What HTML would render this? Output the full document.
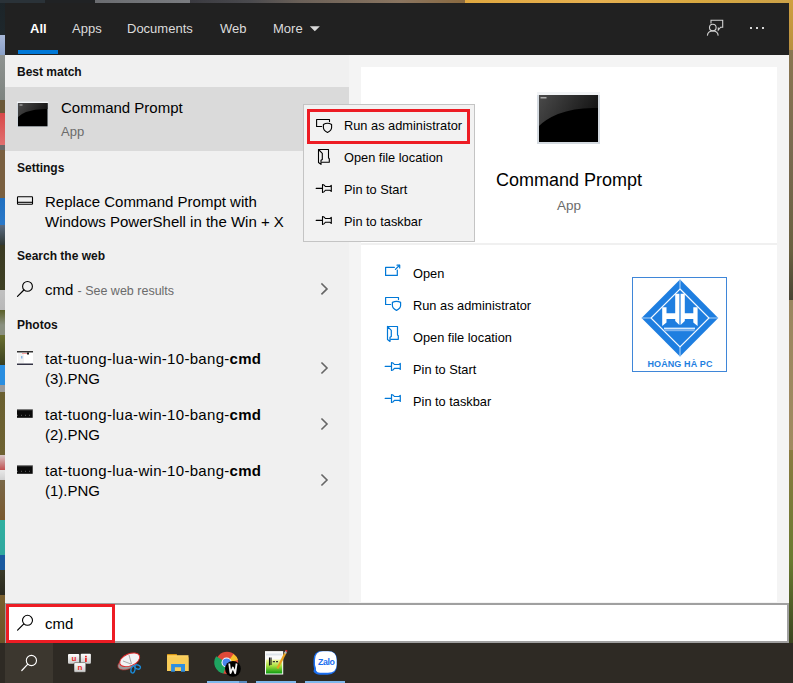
<!DOCTYPE html>
<html><head><meta charset="utf-8">
<style>
*{margin:0;padding:0;box-sizing:border-box}
html,body{width:793px;height:683px;overflow:hidden;background:#2b2620;font-family:"Liberation Sans",sans-serif}
.a{position:absolute;white-space:nowrap}
#desk-l{left:0;top:0;width:5px;height:643px;background:linear-gradient(#1c2428 0,#1e272c 35px,#a8b8d8 35px,#8aa0c8 55px,#8e9290 55px,#7e8480 100px,#6a5838 100px,#6a5838 113px,#d84848 113px,#e07070 145px,#6a6a6a 145px,#6a6a6a 150px,#7a6040 150px,#7a6040 198px,#2070c0 198px,#2a78c8 225px,#5a6a80 225px,#303834 245px,#3a3a22 245px,#3e4024 290px,#c0c0c0 290px,#b8b8b8 310px,#5a6028 310px,#8a9080 325px,#8a9080 335px,#6a7030 335px,#3a4020 365px,#2a8ee0 365px,#2a8ee0 385px,#9a9a9a 385px,#9a9a9a 392px,#6a6030 392px,#6e6232 455px,#d8c8c8 455px,#c05050 470px,#e8e8e8 470px,#d0d0d0 480px,#7a6848 480px,#7a5a30 520px,#30b0a0 520px,#30a8a0 555px,#1a5aa0 555px,#1a5aa0 570px,#3a3a28 570px,#2a2a20 595px,#7a6030 595px,#6a5428 643px)}
#desk-t{left:0;top:0;width:793px;height:3px;background:linear-gradient(90deg,#2a3238 0,#2a3238 45px,#202224 45px,#202224 95px,#6a6c70 95px,#7a7c80 190px,#3a3a40 190px,#4a4a4e 250px,#6a6058 300px,#8a7560 400px,#8a6a40 465px,#e0a840 465px,#e6b050 600px,#d8a840 700px,#caa048 793px)}
#desk-r{left:789px;top:0;width:4px;height:643px;background:linear-gradient(#d0a040 0,#b89040 50px,#8a7650 50px,#7a6a50 150px,#6a6040 250px,#4a4434 300px,#9a8660 300px,#a08a60 450px,#8a7a40 450px,#6a7a30 560px,#3a4420 643px)}
#hdr{left:5px;top:3px;width:784px;height:52px;background:#212121}
.tab{top:21px;font-size:13px;color:#dcdcdc;line-height:16px}
#left{left:5px;top:55px;width:344px;height:548px;background:#f0f0f0}
#strip{left:349px;top:55px;width:440px;height:548px;background:#f4f4f4}
#card{left:361px;top:67px;width:416px;height:535px;background:#fff}
.hd{font-size:12px;font-weight:700;color:#111;line-height:15px}
.t15{font-size:15px;color:#000;line-height:20px}
.g{color:#6b6b6b}
#sbox{left:5px;top:603px;width:784px;height:40px;background:#fff;border:2px solid #a0a0a0;border-right-width:2px}
.m13{font-size:12.8px;color:#000;line-height:16px}
#task{left:0;top:643px;width:793px;height:40px;background:#2e2a24}
</style></head><body>
<div class="a" id="desk-l"></div>
<div class="a" id="desk-t"></div>
<div class="a" id="desk-r"></div>
<div class="a" id="hdr"></div>
<div class="a tab" style="left:30px;color:#fff;font-weight:700">All</div>
<div class="a" style="left:18px;top:50px;width:40px;height:4px;background:#0078d7"></div>
<div class="a tab" style="left:72px">Apps</div>
<div class="a tab" style="left:127px">Documents</div>
<div class="a tab" style="left:220px">Web</div>
<div class="a tab" style="left:273px">More</div>

<svg class="a" style="left:0;top:0" width="793" height="54" viewBox="0 0 793 54" fill="none">
 <path d="M309.8 26.2H319.9L314.85 31.3Z" fill="#d8d8d8"/>
 <g stroke="#d4d4d4" stroke-width="1.1">
  <path d="M711 23.6V20.3H722.7V27.2H720.6L718.3 30V27.6"/>
  <circle cx="712.8" cy="27.6" r="3.3"/>
  <path d="M707.4 35.6Q707.8 31 712.8 31Q717.8 31 718.2 35.6"/>
 </g>
 <g fill="#d8d8d8"><rect x="750" y="27" width="2" height="2"/><rect x="756" y="27" width="2" height="2"/><rect x="762" y="27" width="2" height="2"/></g>
</svg>
<div class="a" id="left"></div>
<div class="a" id="strip"></div>
<div class="a" id="card"></div>

<div class="a hd" style="left:17px;top:65px">Best match</div>
<div class="a" style="left:5px;top:87px;width:344px;height:64px;background:#dadada"></div>
<div class="a t15" style="left:61px;top:98px">Command Prompt</div>
<div class="a t15 g" style="left:61px;top:122px;font-size:13px">App</div>

<div class="a hd" style="left:17px;top:161px">Settings</div>
<div class="a t15" style="left:45px;top:192px">Replace Command Prompt with</div>
<div class="a t15" style="left:45px;top:212px">Windows PowerShell in the Win + X</div>

<div class="a hd" style="left:17px;top:249px">Search the web</div>
<div class="a t15" style="left:45px;top:280px">cmd <span class="g" style="font-size:12.5px">- See web results</span></div>

<div class="a hd" style="left:17px;top:318px">Photos</div>
<div class="a t15" style="left:45px;top:349px;letter-spacing:0.3px">tat-tuong-lua-win-10-bang-<b>cmd</b></div>
<div class="a t15" style="left:45px;top:369px">(3).PNG</div>
<div class="a t15" style="left:45px;top:405px;letter-spacing:0.3px">tat-tuong-lua-win-10-bang-<b>cmd</b></div>
<div class="a t15" style="left:45px;top:425px">(2).PNG</div>
<div class="a t15" style="left:45px;top:461px;letter-spacing:0.3px">tat-tuong-lua-win-10-bang-<b>cmd</b></div>
<div class="a t15" style="left:45px;top:481px">(1).PNG</div>

<div class="a t15" style="left:496px;top:169px;font-size:18px;line-height:22px">Command Prompt</div>
<div class="a t15 g" style="left:557px;top:196px;font-size:13.5px">App</div>
<div class="a" style="left:361px;top:243px;width:416px;height:2px;background:#f0f0f0"></div>


<div class="a" style="left:303px;top:104px;width:172px;height:138px;background:#f2f2f2;border:1px solid #c4c4c4"></div>
<div class="a" style="left:307px;top:109px;width:163px;height:35px;border:3px solid #ed1c24"></div>
<div class="a m13" style="left:344px;top:118px">Run as administrator</div>
<div class="a m13" style="left:344px;top:150px">Open file location</div>
<div class="a m13" style="left:344px;top:182px">Pin to Start</div>
<div class="a m13" style="left:344px;top:214px">Pin to taskbar</div>

<div class="a m13" style="left:413px;top:266px">Open</div>
<div class="a m13" style="left:413px;top:298px">Run as administrator</div>
<div class="a m13" style="left:413px;top:330px">Open file location</div>
<div class="a m13" style="left:413px;top:362px">Pin to Start</div>
<div class="a m13" style="left:413px;top:394px">Pin to taskbar</div>


<svg class="a" style="left:0;top:0" width="793" height="683" viewBox="0 0 793 683" fill="none" stroke-linejoin="round" stroke-linecap="round">
 
 <g stroke="#000" stroke-width="1.1">
  <g transform="translate(312 114)"><path d="M9.7 12.5H4.6V5.5H17.5V7.6"/><path d="M11.4 10.4Q15.5 8.2 19.6 10.4V13.6Q19.6 16.6 15.5 18.4Q11.4 16.6 11.4 13.6Z"/></g>
  <g transform="translate(312 145)"><path d="M6.5 4.5H16.5V13L17.3 13.7V17.3H9.7"/><path d="M6.5 4.5V17.5L9 19.4V15.3L10.3 14.5V8.3Z"/></g>
  <g transform="translate(312 177)"><path d="M4.2 11.4H10.5"/><path d="M10.5 7.5V15.5Q12 15.4 13.4 13.3H18L19.3 14.4V8.4L18 9.5H13.4Q12 7.6 10.5 7.5Z"/></g>
  <g transform="translate(312 209)"><path d="M4.2 11.4H10.5"/><path d="M10.5 7.5V15.5Q12 15.4 13.4 13.3H18L19.3 14.4V8.4L18 9.5H13.4Q12 7.6 10.5 7.5Z"/></g>
 </g>
 <g stroke="#0078d7" stroke-width="1.2">
  <g transform="translate(381 258)"><path d="M13.4 9.3H4.6V17.4H16.3V12.1"/><path d="M14.4 11.4L18.3 7.5"/><path d="M16 7.2H18.7V9.9" /></g>
  <g transform="translate(381 292)"><path d="M9.7 12.5H4.6V5.5H17.5V7.6"/><path d="M11.4 10.4Q15.5 8.2 19.6 10.4V13.6Q19.6 16.6 15.5 18.4Q11.4 16.6 11.4 13.6Z"/></g>
  <g transform="translate(381 322)"><path d="M6.5 4.5H16.5V13L17.3 13.7V17.3H9.7"/><path d="M6.5 4.5V17.5L9 19.4V15.3L10.3 14.5V8.3Z"/></g>
  <g transform="translate(381 355)"><path d="M4.2 11.4H10.5"/><path d="M10.5 7.5V15.5Q12 15.4 13.4 13.3H18L19.3 14.4V8.4L18 9.5H13.4Q12 7.6 10.5 7.5Z"/></g>
  <g transform="translate(381 387)"><path d="M4.2 11.4H10.5"/><path d="M10.5 7.5V15.5Q12 15.4 13.4 13.3H18L19.3 14.4V8.4L18 9.5H13.4Q12 7.6 10.5 7.5Z"/></g>
 </g>
</svg>


<svg class="a" style="left:632px;top:277px" width="96" height="96" viewBox="632 277 96 96">
 <rect x="632.5" y="277.5" width="94" height="94" fill="#fff" stroke="#3f86d8" stroke-width="1"/>
 <path d="M680 279.6L718.2 318L680 356.4L641.6 318Z" fill="#1e7ee0"/>
 <path d="M680 289L709 318L680 347L651 318Z" fill="none" stroke="#f4f9ff" stroke-width="1.2"/>
 <path d="M680 279.6V289M680 347V356.4M641.6 318H651M709 318H718.2" stroke="#a8d0f8" stroke-width="1.1"/>
 <g fill="#fff">
  <path d="M662.2 307.3H666.5V313.2H675.2V293.8H679.4V325L675.2 321V319H666.5V322.5L662.2 326Z"/>
  <path d="M697.6 307.3H693.3V313.2H684.8V293.8H680.6V325L684.8 321V319H693.3V322.5L697.6 326Z"/>
 </g>
 <rect x="664" y="327.6" width="31" height="1.6" fill="#d8ecff"/>
 <rect x="664.5" y="329.2" width="30" height="2" fill="#7fb4ee"/>
 <text x="680" y="366.6" text-anchor="middle" font-family="Liberation Sans" font-weight="700" font-size="9" fill="#1f7fdf" letter-spacing="0.1">HOÀNG HÀ PC</text>
</svg>


<svg class="a" style="left:0;top:0" width="793" height="683" viewBox="0 0 793 683" fill="none">
 <defs>
  <linearGradient id="cmdhl" x1="0" y1="0" x2="1" y2="0.3">
   <stop offset="0" stop-color="#4a4a4a"/><stop offset="1" stop-color="#161616"/>
  </linearGradient>
 </defs>
 <!-- small cmd icon -->
 <rect x="17" y="101.6" width="31.3" height="25.4" fill="#cfd6dc"/>
 <rect x="17" y="101.6" width="31.3" height="1.6" fill="#f4f6f8"/>
 <rect x="18" y="103" width="29.5" height="23.3" fill="#000"/>
 <path d="M18 103H47.5V109Q36 108.5 26 112Q21 114 18 117Z" fill="url(#cmdhl)"/>
 <rect x="19.5" y="104.5" width="3" height="1" fill="#bbb"/>
 <!-- large cmd icon -->
 <rect x="537" y="92" width="63" height="52" fill="#d4dae0"/>
 <rect x="537" y="92" width="63" height="3" fill="#f2f4f6"/>
 <rect x="539" y="95" width="59" height="47" fill="#000"/>
 <path d="M539 95H598V108Q576 107 558 114Q546 119 539 126Z" fill="url(#cmdhl)"/>
 <rect x="540.5" y="97" width="6" height="1.5" fill="#aaa"/>
 <!-- monitor icon -->
 <rect x="17.5" y="196.8" width="15" height="7.5" rx="0.6" stroke="#000" stroke-width="1.1"/>
 <path d="M17.5 202.3H32.5" stroke="#000" stroke-width="1.1"/>
 <!-- search web icon -->
 <circle cx="27.5" cy="286.4" r="4.9" stroke="#000" stroke-width="1.1"/>
 <path d="M23.9 290L17.5 296.4" stroke="#000" stroke-width="1.2" stroke-linecap="round"/>
 <!-- chevrons -->
 <g stroke="#666" stroke-width="1.6" stroke-linecap="square">
  <path d="M322 284L327 288.9L322 293.8"/>
  <path d="M322 363.1L327 368L322 372.9"/>
  <path d="M322 419.1L327 424L322 428.9"/>
  <path d="M322 475.1L327 480L322 484.9"/>
 </g>
 <!-- photo thumbs -->
 <rect x="17" y="351" width="16" height="14" fill="#fff"/>
 <rect x="17" y="351" width="16" height="1.5" fill="#333"/>
 <rect x="17" y="363.5" width="16" height="1.5" fill="#334"/>
 <rect x="18" y="353" width="6" height="10" fill="#f2f2f2"/>
 <rect x="21" y="356" width="1.5" height="2.5" fill="#8bb8e8"/>
 <rect x="27" y="352.5" width="2" height="2" fill="#111"/>
 <rect x="22" y="353" width="5" height="1" fill="#f2a0a0"/>
 <rect x="17" y="409.4" width="15.7" height="8.4" fill="#0a0a0a"/>
 <rect x="17" y="409.4" width="15.7" height="0.8" fill="#888"/>
 <path d="M17 415.3H33" stroke="#777" stroke-width="0.8" stroke-dasharray="1 3"/>
 <rect x="17" y="465.4" width="15.7" height="8.4" fill="#0a0a0a"/>
 <rect x="17" y="465.4" width="15.7" height="0.8" fill="#888"/>
 <path d="M17 471.3H33" stroke="#777" stroke-width="0.8" stroke-dasharray="1 3"/>
</svg>

<div class="a" id="sbox"></div>
<svg class="a" style="left:0;top:600px" width="60" height="40" viewBox="0 600 60 40" fill="none">
 <circle cx="27.5" cy="620.3" r="5" stroke="#000" stroke-width="1.1"/>
 <path d="M23.6 624.1L17.6 630.1" stroke="#000" stroke-width="1.2" stroke-linecap="round"/>
</svg>
<div class="a t15" style="left:45px;top:614px">cmd</div>
<div class="a" style="left:6px;top:604px;width:109px;height:39px;border:3px solid #ed1c24"></div>

<div class="a" id="task"></div>
<div class="a" style="left:5px;top:643px;width:48px;height:40px;background:#3c372f"></div>

<svg class="a" style="left:0;top:643px" width="793" height="40" viewBox="0 643 793 40" fill="none">
 <defs>
  <linearGradient id="npg" x1="0" y1="0" x2="0" y2="1"><stop offset="0" stop-color="#f4f8a8"/><stop offset="0.45" stop-color="#a8e040"/><stop offset="1" stop-color="#0a9a10"/></linearGradient>
  <linearGradient id="key" x1="0" y1="0" x2="0" y2="1"><stop offset="0" stop-color="#ffffff"/><stop offset="1" stop-color="#c8c8c8"/></linearGradient>
 </defs>
 <!-- search -->
 <circle cx="31.4" cy="660.5" r="5.1" stroke="#fff" stroke-width="1.1"/>
 <path d="M27.6 664.4L21.8 670.5" stroke="#fff" stroke-width="1.2" stroke-linecap="round"/>
 <!-- unikey -->
 <rect x="68" y="654" width="11.3" height="9.8" rx="1" fill="url(#key)"/>
 <rect x="80.7" y="653.8" width="10.2" height="10" rx="1" fill="url(#key)"/>
 <rect x="74" y="662.6" width="11.8" height="9.7" rx="1" fill="url(#key)" stroke="#2f2a24" stroke-width="0.5"/>
 <g fill="#e82828" font-family="Liberation Sans" font-weight="700" font-size="8">
  <text x="71.5" y="660.5">u</text></g><rect x="85" y="655.8" width="1.8" height="1.4" fill="#e82828"/><rect x="85" y="657.8" width="1.8" height="4.2" fill="#e82828"/><g fill="#e82828" font-family="Liberation Sans" font-weight="700" font-size="8"><text x="77.5" y="669.5">n</text>
 </g>
 <!-- snipping -->
 <ellipse cx="127.5" cy="663.5" rx="10.2" ry="5.6" transform="rotate(-22 127.5 663.5)" fill="#9a9a9a" stroke="#c03030" stroke-width="0.6"/>
 <ellipse cx="129.7" cy="659.8" rx="10.6" ry="6" transform="rotate(-22 129.7 659.8)" fill="#f2f2f4" stroke="#e02a2a" stroke-width="0.9"/>
 <path d="M123 661L131 664M129 655L131.5 664" stroke="#888" stroke-width="0.7"/>
 <ellipse cx="133" cy="669.5" rx="2" ry="3.6" transform="rotate(15 133 669.5)" stroke="#1a8ad8" stroke-width="1.3"/>
 <ellipse cx="137.6" cy="667" rx="2.9" ry="2" transform="rotate(20 137.6 667)" stroke="#1a8ad8" stroke-width="1.3"/>
 <!-- explorer -->
 <rect x="167.1" y="654.1" width="9.8" height="3.5" fill="#e8a010"/>
 <rect x="167.1" y="655.2" width="21.4" height="15.8" fill="#fcd060"/>
 <rect x="167.1" y="657.3" width="21.4" height="13.7" fill="#f8cc58"/>
 <path d="M171.1 671.7V663.9H185V671.7H181V667.2H174.9V671.7Z" fill="#2f8fe0"/>
 <!-- chrome -->
 <circle cx="227" cy="662.9" r="11.1" fill="#e04a3a"/>
 <path d="M227 662.9L216.2 656.2A11.1 11.1 0 0 0 223.5 673.5Z" fill="#1ea460"/>
 <path d="M227 662.9L238 660A11.1 11.1 0 0 0 233.5 654Z" fill="#f6c02c"/>
 <circle cx="226.6" cy="662.5" r="5.1" fill="#fff"/>
 <circle cx="226.6" cy="662.5" r="4.1" fill="#4a88f0"/>
 <circle cx="232.9" cy="668.8" r="7.9" fill="#000"/>
 <path d="M229.2 663.5L230.5 673.2L232.9 667.5L235.2 673.2L236.6 663.5" stroke="#f4f4f4" stroke-width="1.8" stroke-linejoin="round"/>
 <!-- notepad++ -->
 <rect x="265" y="651.1" width="18.2" height="23.4" fill="#fafafa"/>
 <rect x="266" y="659.5" width="16.2" height="14" fill="url(#npg)"/>
 <rect x="266" y="653.5" width="16.2" height="2" fill="#dde4ea"/>
 <path d="M269.5 657.5V665.5M271 657.5V665" stroke="#111" stroke-width="1.1"/>
 <path d="M272.8 661.6H275M276 661.6H278" stroke="#333" stroke-width="1.2"/>
 <path d="M277.4 668.4L285.6 652.4" stroke="#e8a020" stroke-width="2.2"/>
 <path d="M285 653.4L286.3 651" stroke="#b0b8c0" stroke-width="2"/>
 <path d="M286 651.5L286.8 650.2" stroke="#d82828" stroke-width="2"/>
 <!-- zalo -->
 <path d="M313.5 660Q313.5 651 322 651H328Q337 651 337 660V665Q337 674.7 327.5 674.7H320Q316 674.7 313.5 671.5Q314.5 669 313.5 665Z" fill="#1a6ef0"/>
 <path d="M315 660Q315 651.3 323 651.3H328Q336.6 651.3 336.6 660V664.5Q336.6 672.8 328 672.8H320Q317 672.8 316 670.5Q316.3 668 315 665Z" fill="#fff"/>
 <text x="326.3" y="665.3" text-anchor="middle" font-family="Liberation Sans" font-weight="700" font-size="8.8" fill="#1a6ef0" letter-spacing="-0.4">Zalo</text>
 <!-- running indicators -->
 <rect x="207" y="681" width="32" height="2" fill="#7fb8ec"/>
 <rect x="239" y="681" width="8" height="2" fill="#5a8cc0"/>
 <rect x="256" y="681" width="40" height="2" fill="#7fb8ec"/>
 <rect x="305" y="681" width="40" height="2" fill="#7fb8ec"/>
</svg>
</body></html>
